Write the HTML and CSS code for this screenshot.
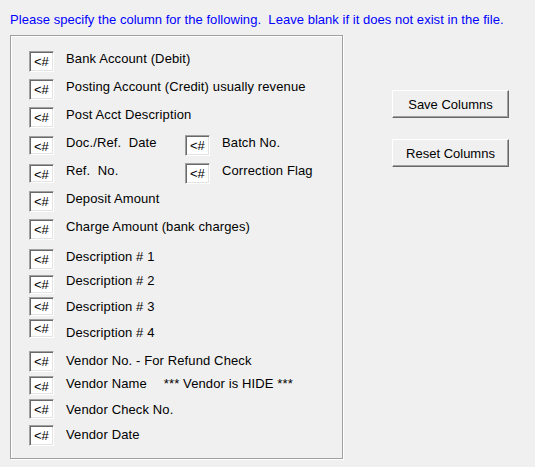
FILE: index.html
```html
<!DOCTYPE html>
<html lang="en">
<head>
  <meta charset="UTF-8" />
  <title>Import Columns</title>
  <link rel="stylesheet" href="styles.css">
</head>
<body>

  <div class="prompt">Please specify the column for the following.&nbsp; Leave blank if it does not exist in the file.</div>

  <div class="main">
    <div class="group">
      <div class="field first">
        <span class="col">&lt;#</span><span class="label">Bank Account (Debit)</span>
      </div>
      <div class="field">
        <span class="col">&lt;#</span><span class="label">Posting Account (Credit) usually revenue</span>
      </div>
      <div class="field">
        <span class="col">&lt;#</span><span class="label">Post Acct Description</span>
      </div>
      <div class="field">
        <div class="pair"><span class="col">&lt;#</span><span class="label">Doc./Ref.  Date</span></div>
        <span class="col">&lt;#</span><span class="label">Batch No.</span>
      </div>
      <div class="field">
        <div class="pair"><span class="col">&lt;#</span><span class="label">Ref.  No.</span></div>
        <span class="col">&lt;#</span><span class="label">Correction Flag</span>
      </div>
      <div class="field">
        <span class="col">&lt;#</span><span class="label">Deposit Amount</span>
      </div>
      <div class="field">
        <span class="col">&lt;#</span><span class="label">Charge Amount (bank charges)</span>
      </div>

      <div class="field desc1">
        <span class="col">&lt;#</span><span class="label">Description # 1</span>
      </div>
      <div class="field desc2">
        <span class="col">&lt;#</span><span class="label">Description # 2</span>
      </div>
      <div class="field desc3">
        <span class="col">&lt;#</span><span class="label">Description # 3</span>
      </div>
      <div class="field desc4">
        <span class="col">&lt;#</span><span class="label">Description # 4</span>
      </div>

      <div class="field vend1">
        <span class="col">&lt;#</span><span class="label">Vendor No. - For Refund Check</span>
      </div>
      <div class="field vend2">
        <span class="col">&lt;#</span><span class="label">Vendor Name<span class="note">*** Vendor is HIDE ***</span></span>
      </div>
      <div class="field vend3">
        <span class="col">&lt;#</span><span class="label">Vendor Check No.</span>
      </div>
      <div class="field vend4">
        <span class="col">&lt;#</span><span class="label">Vendor Date</span>
      </div>
    </div>

    <div class="actions">
      <button type="button">Save Columns</button>
      <button type="button">Reset Columns</button>
    </div>
  </div>

</body>
</html>
```

FILE: styles.css
```css
body {
  font-family: "Liberation Sans", Arial, sans-serif;
  font-size: 13px;
  line-height: 15px;
  background-color: #f0f0f0;
  color: #000;
  margin: 0;
  width: 535px;
  height: 467px;
  overflow: hidden;
}
.prompt {
  color: #0000ff;
  padding: 12px 10px 0;
  white-space: nowrap;
  letter-spacing: 0.04px;
}
.main {
  display: flex;
  align-items: flex-start;
  margin-top: 8px;
  padding-left: 10px;
}

/* etched frame round the column fields */
.group {
  box-sizing: border-box;
  width: 333px;
  height: 424px;
  border: 1px solid #a0a0a0;
  box-shadow: inset 1px 1px 0 #fff, 1px 1px 0 #fff;
  padding: 15px 0 0 18px;
  display: flex;
  flex-direction: column;
}
.field {
  display: flex;
  align-items: center;
  height: 21px;
  margin-top: 7px;
}
.field.first {
  margin-top: 0;
}
.pair {
  display: flex;
  align-items: center;
  width: 156px;
}

/* sunken text box */
.col {
  box-sizing: border-box;
  width: 25px;
  height: 100%;
  background: #fff;
  border: 1px solid;
  border-color: #a0a0a0 #fff #fff #a0a0a0;
  box-shadow: inset 1px 1px 0 #696969, inset -1px -1px 0 #e3e3e3;
  padding: 2px 0 0 4px;
  line-height: 15px;
  flex-shrink: 0;
}
.label {
  margin-left: 12px;
  margin-bottom: 6px;
  white-space: pre;
  letter-spacing: 0.12px;
}
.note {
  margin-left: 17px;
}

.desc1 { margin-top: 9px; }
.desc1 .label { margin-bottom: 7px; }
.desc2 { margin-top: 5px; height: 19px; }
.desc2 .label { margin-bottom: 8px; }
.desc3 { margin-top: 3px; height: 19px; }
.desc3 .label { margin-bottom: 0; }
.desc4 { margin-top: 3px; height: 19px; }
.desc4 .label { margin-bottom: 0; margin-top: 7px; }
.desc2 .col, .desc3 .col, .desc4 .col { padding-top: 1px; }

.vend1 { margin-top: 13px; }
.vend1 .label { margin-bottom: 3px; }
.vend2 { margin-top: 4px; height: 19px; }
.vend2 .label { margin-bottom: 5px; }
.vend3 { margin-top: 4px; height: 20px; }
.vend3 .label { margin-bottom: 0; }
.vend4 { margin-top: 6px; }
.vend4 .label { margin-bottom: 3px; }

.actions {
  display: flex;
  flex-direction: column;
  gap: 21px;
  margin-left: 49px;
  margin-top: 55px;
}
button {
  box-sizing: border-box;
  width: 117px;
  height: 28px;
  font-family: inherit;
  font-size: 13px;
  color: #000;
  background: #f0f0f0;
  border: 1px solid;
  border-color: #fff #696969 #696969 #fff;
  box-shadow: inset -1px -1px 0 #a0a0a0;
  padding: 0;
}
```
